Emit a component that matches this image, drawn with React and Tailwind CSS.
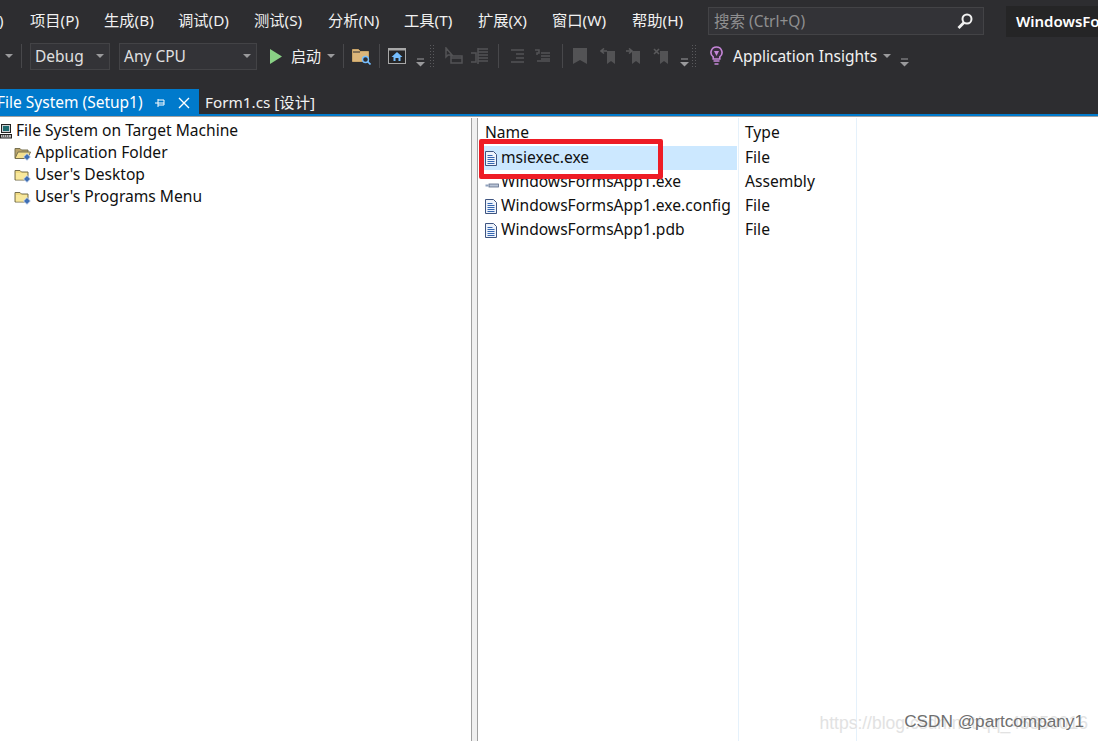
import React from 'react';

const font = "font-['Noto_Sans','Noto_Sans_CJK_SC',sans-serif]";

const menus = [
  { label: '项目(P)', w: 'w-[74px]' },
  { label: '生成(B)', w: 'w-[74px]' },
  { label: '调试(D)', w: 'w-[76px]' },
  { label: '测试(S)', w: 'w-[74px]' },
  { label: '分析(N)', w: 'w-[76px]' },
  { label: '工具(T)', w: 'w-[74px]' },
  { label: '扩展(X)', w: 'w-[74px]' },
  { label: '窗口(W)', w: 'w-[80px]' },
  { label: '帮助(H)', w: 'w-[76px]' },
];

const Caret = ({ color = '#9a9a9c' }) => (
  <svg width="8" height="4" viewBox="0 0 8 4" className="shrink-0">
    <path d="M0 0h8L4 4z" fill={color} />
  </svg>
);

const Sep = () => <div className="h-6 w-px shrink-0 bg-[#48484b]" />;

const Grip = () => (
  <div className="h-6 w-[6px] shrink-0 bg-[radial-gradient(#5a5a5d_1px,transparent_1px)] bg-[length:3px_3px]" />
);

const Overflow = () => (
  <svg width="9" height="9" viewBox="0 0 9 9" className="mt-3 shrink-0">
    <path d="M1 1h7" stroke="#9a9a9c" />
    <path d="M0 4h9L4.5 8.5z" fill="#9a9a9c" />
  </svg>
);

const FolderSearch = () => (
  <svg width="19" height="17" viewBox="0 0 19 17" className="shrink-0">
    <path d="M0.500 1.500h6l2 2h8v10h-16z" fill="#dcb67a" stroke="#c9a468" />
    <path d="M1 4h7" stroke="#2d2d30" />
    <circle cx="13.500" cy="11.500" r="3" fill="#2d2d30" stroke="#75beff" strokeWidth="1.400" />
    <path d="M15.500 13.500l3 3" stroke="#75beff" strokeWidth="1.600" />
  </svg>
);

const HomeWindow = () => (
  <svg width="18" height="16" viewBox="0 0 18 16" className="shrink-0">
    <rect x="0.500" y="0.500" width="17" height="15" fill="#252526" stroke="#a8a8a8" />
    <path d="M1 1h16v1.500H1z" fill="#a8a8a8" />
    <path d="M9 4L3.500 9h2v4h7V9h2z" fill="#75beff" />
    <rect x="7.500" y="10" width="3" height="3" fill="#252526" />
  </svg>
);

const MutedIcon = ({ d, w = 18 }) => (
  <svg width={w} height="18" viewBox={`0 0 ${w} 18`} className="shrink-0">
    <path d={d} fill="none" stroke="#535355" strokeWidth="1.500" />
  </svg>
);

const Bookmark = ({ extra }) => (
  <svg width="16" height="16" viewBox="0 0 16 16" className="shrink-0">
    {extra ? (
      <>
        <path d={extra} fill="none" stroke="#59595b" strokeWidth="1.600" />
        <path d="M7 3h8v13l-4-3-4 3z" fill="#535355" />
      </>
    ) : (
      <path d="M1 0h14v16l-7-4-7 4z" fill="#535355" />
    )}
  </svg>
);

const Bulb = () => (
  <svg width="13" height="20" viewBox="0 0 13 20" className="shrink-0">
    <path d="M6.500 1a5.500 5.500 0 0 0-3.300 9.900V13h6.600v-2.100A5.500 5.500 0 0 0 6.500 1z" fill="#3a2d3f" stroke="#c586d8" strokeWidth="1.600" />
    <path d="M4 5h5L6.500 10z" fill="#c586d8" />
    <path d="M3.500 15h6M4.500 18h4" stroke="#c586d8" strokeWidth="1.600" />
  </svg>
);

const Combo = ({ label, w }) => (
  <div className={`flex h-[27px] shrink-0 items-center justify-between border border-[#434346] bg-[#333337] pl-[4px] pr-[5px] ${w}`}>
    <span className="pt-[2px] text-[15.500px] leading-none text-[#e0e0e0]">{label}</span>
    <Caret />
  </div>
);

const TreeFolder = ({ open }) => (
  <svg width="18" height="15" viewBox="0 0 18 15" className="shrink-0">
    <path d="M1 2.500h5l1.500 1.500h6.500v8H1z" fill={open ? '#b9a36a' : '#f0da82'} stroke="#77704f" />
    {open ? (
      <path d="M4 6h12.500l-3 6.500H1z" fill="#f5e08e" stroke="#77704f" />
    ) : (
      <path d="M2 5h11v6.500H2z" fill="#f8e89c" />
    )}
    <path d="M13 7.500l3.500 3.500-3.500 3.500L9.500 11z" fill="#3f6fb5" stroke="#e4ecf7" strokeWidth="0.800" />
  </svg>
);

const Computer = () => (
  <svg width="12" height="15" viewBox="0 0 12 15" className="shrink-0">
    <rect x="1.500" y="0.500" width="9" height="8" fill="#c9ced2" stroke="#222" />
    <rect x="3" y="2" width="6" height="5" fill="#1d6b70" />
    <rect x="0.500" y="10.500" width="11" height="3.500" fill="#bdbdbd" stroke="#222" />
    <path d="M2 12h8" stroke="#222" strokeDasharray="1 1" />
  </svg>
);

const FileIcon = () => (
  <svg width="12" height="15" viewBox="0 0 12 15" className="shrink-0">
    <path d="M0.500 0.500h8l3 3v11h-11z" fill="#eef3fb" stroke="#3f5580" />
    <path d="M2.500 4.500h5M2.500 6.500h7M2.500 8.500h7M2.500 10.500h7M2.500 12.500h7" stroke="#3566b0" />
  </svg>
);

const AssemblyIcon = () => (
  <svg width="14" height="15" viewBox="0 0 14 15" className="shrink-0">
    <rect x="4" y="9" width="9.500" height="3" fill="#b9c4d6" stroke="#5c6c88" strokeWidth="0.800" />
    <rect x="0.500" y="9.500" width="3" height="2" fill="#8fa1bd" />
  </svg>
);

const treeItems = ['Application Folder', "User's Desktop", "User's Programs Menu"];

const files = [
  { name: 'msiexec.exe', type: 'File', selected: true },
  { name: 'WindowsFormsApp1.exe', type: 'Assembly', cut: true },
  { name: 'WindowsFormsApp1.exe.config', type: 'File' },
  { name: 'WindowsFormsApp1.pdb', type: 'File' },
];

export default function App() {
  return (
    <div className={`flex h-[741px] w-[1098px] flex-col overflow-hidden bg-white ${font}`}>
      <div className="h-[114px] shrink-0 bg-[#2d2d30] text-[#f1f1f1]">
        {/* menu row */}
        <div className="flex h-[42px] items-center">
          <span className="-ml-[1px] w-[31px] pb-[2px] text-[15px] text-[#f1f1f1]">)</span>
          {menus.map((m) => (
            <span key={m.label} className={`shrink-0 pb-[2px] text-[15.300px] ${m.w}`}>
              {m.label}
            </span>
          ))}
          <div className="flex h-[28px] w-[276px] shrink-0 items-center justify-between border border-[#434346] bg-[#333337] pl-[5px] pr-[9px]">
            <span className="pt-px text-[15.500px] text-[#8f8f90]">搜索 (Ctrl+Q)</span>
            <svg width="18" height="18" viewBox="0 0 18 18">
              <circle cx="11" cy="7" r="4.500" fill="none" stroke="#f1f1f1" strokeWidth="2" />
              <path d="M8 10.500L2.500 16" stroke="#f1f1f1" strokeWidth="2.800" />
            </svg>
          </div>
          <div className="ml-[22px] flex h-[31px] flex-1 items-center overflow-hidden bg-[#252526] pl-[10px]">
            <span className="whitespace-nowrap text-[15px] font-semibold text-white">WindowsFormsApp1</span>
          </div>
        </div>

        {/* toolbar row */}
        <div className="-mt-[1px] flex h-[30px] items-center">
          <div className="ml-[5px] mr-[8px]"><Caret /></div>
          <div className="mr-[8px]"><Sep /></div>
          <Combo label="Debug" w="w-[80px]" />
          <div className="w-[9px] shrink-0" />
          <Combo label="Any CPU" w="w-[138px]" />
          <svg width="12" height="15" viewBox="0 0 12 15" className="ml-[13px] shrink-0">
            <path d="M0 0l12 7.500L0 15z" fill="#89d185" />
          </svg>
          <span className="ml-[9px] text-[15px] text-[#f1f1f1]">启动</span>
          <div className="ml-[6px] mr-[8px]"><Caret /></div>
          <Sep />
          <div className="ml-[8px] mr-[8px]"><FolderSearch /></div>
          <Sep />
          <div className="ml-[8px]"><HomeWindow /></div>
          <div className="ml-[10px]"><Overflow /></div>
          <div className="ml-[4px]"><Grip /></div>
          <div className="ml-[10px]"><MutedIcon d="M1 1v9l2-2h4L1 1zM6 9h11v7H6zM6 11h11" /></div>
          <div className="ml-[7px]"><MutedIcon d="M1 6h5v9H1M8 2h10M8 5h10M8 8h10M8 11h10M8 14h10M8 1v16" /></div>
          <div className="ml-[10px] mr-[11px]"><Sep /></div>
          <div><MutedIcon w={15} d="M1 3h13M6 7h8M6 11h8M1 15h13" /></div>
          <div className="ml-[9px] mr-[11px]"><MutedIcon w={17} d="M1 3h4v3H3v2M7 6h9M7 9h9M7 12h9M3 14h13" /></div>
          <Sep />
          <div className="ml-[9px]"><Bookmark /></div>
          <div className="ml-[12px]"><Bookmark extra="M7 3H1m3-2.500L1 3l3 2.500" /></div>
          <div className="ml-[9px]"><Bookmark extra="M1 3h6M4 .5L7 3 4 5.500" /></div>
          <div className="ml-[12px]"><Bookmark extra="M1 1l5 5M6 1L1 6" /></div>
          <div className="ml-[11px]"><Overflow /></div>
          <div className="ml-[2px]"><Grip /></div>
          <div className="ml-[13px]"><Bulb /></div>
          <span className="ml-[10px] whitespace-nowrap pt-[2px] text-[15.500px] text-[#f1f1f1]">Application Insights</span>
          <div className="ml-[6px]"><Caret /></div>
          <div className="ml-[9px]"><Overflow /></div>
        </div>

        {/* document tabs */}
        <div className="mt-[18px] flex h-[25px] items-center">
          <div className="flex h-[25px] w-[199px] shrink-0 items-center overflow-hidden bg-[#007acc] pt-[3px] text-white">
            <span className="-ml-[3px] w-[157px] shrink-0 whitespace-nowrap text-[15.500px] leading-none">File System (Setup1)</span>
            <svg width="12" height="12" viewBox="0 0 12 12" className="shrink-0">
              <path d="M1 6h3M4 2v8M4 3h6v5H4M4 6h6" fill="none" stroke="#fff" />
            </svg>
            <svg width="12" height="12" viewBox="0 0 12 12" className="ml-[12px] shrink-0">
              <path d="M1 1l10 10M11 1L1 11" stroke="#fff" strokeWidth="1.400" />
            </svg>
          </div>
          <span className="ml-[6px] whitespace-nowrap pt-[3px] text-[15.300px] leading-none text-[#f1f1f1]">Form1.cs [设计]</span>
        </div>
      </div>
      <div className="h-[2px] shrink-0 bg-[#007acc]" />

      {/* panes */}
      <div className="flex min-h-0 flex-1 border-t border-t-[#a0a0a0] bg-white pt-px text-[15.600px] text-[#101010]">
        <div className="w-[472px] shrink-0 border-r border-[#a0a0a0] pt-[2px]">
          <div className="flex h-[22px] items-center gap-[4px]">
            <Computer />
            <span>File System on Target Machine</span>
          </div>
          {treeItems.map((item, i) => (
            <div key={item} className="flex h-[22px] items-center gap-[3px] pl-[14px]">
              <TreeFolder open={i === 0} />
              <span>{item}</span>
            </div>
          ))}
        </div>
        <div className="w-[5px] shrink-0 bg-[#f0f0f0]" />
        <div className="relative min-w-0 flex-1 border-l border-[#a0a0a0] pl-px">
          <div className="flex h-[28px] items-end pb-[2px]">
            <span className="w-[259px] shrink-0 pl-[6px]">Name</span>
            <span className="pl-[7px]">Type</span>
          </div>
          {files.map((f) => (
            <div key={f.name} className="flex h-[24px] items-center">
              <div className={`ml-[4px] flex h-[24px] w-[254px] shrink-0 items-center gap-[4px] pl-[2px] ${f.selected ? 'bg-[#cce8ff]' : ''}`}>
                {f.cut ? <AssemblyIcon /> : <FileIcon />}
                <span className={`whitespace-nowrap ${f.cut ? '-ml-[2px]' : ''}`}>{f.name}</span>
              </div>
              <span className="pl-[8px]">{f.type}</span>
            </div>
          ))}
          {/* column dividers */}
          <div className="absolute bottom-0 left-[260px] top-0 w-px bg-[#e5f1fb]" />
          <div className="absolute bottom-0 left-[378px] top-0 w-px bg-[#e5f1fb]" />
          {/* annotation box */}
          <div className="absolute left-[1px] top-[21px] h-[40px] w-[184px] rounded-[2px] border-[5px] border-[#ee1c25]" />
          {/* blog watermark */}
          <span className="absolute bottom-[5px] right-[10px] whitespace-nowrap font-['Liberation_Sans',sans-serif] text-[17.500px] text-[#e2e2e2]">https://blog.csdn.net/qq_45850016</span>
          <span className="absolute bottom-[6px] right-[14px] whitespace-nowrap font-['Liberation_Sans',sans-serif] text-[17.200px] text-[#6f6f6f]">CSDN @partcompany1</span>
        </div>
      </div>
    </div>
  );
}
